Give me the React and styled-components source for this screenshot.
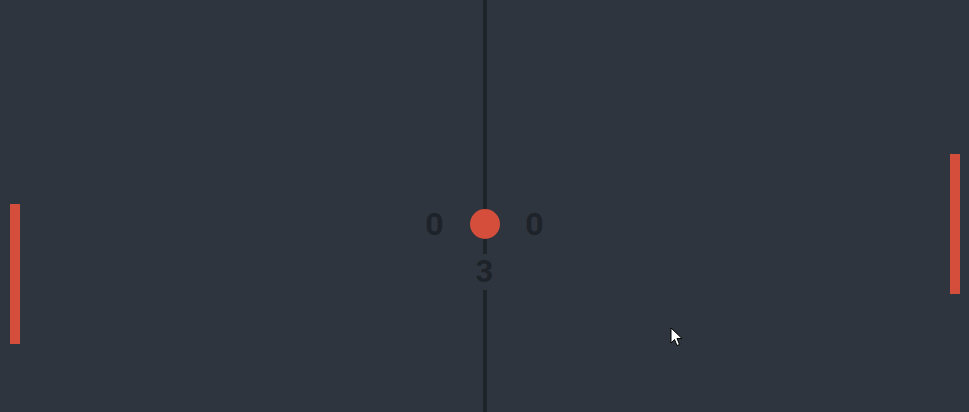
import React from 'react';
import styled, { createGlobalStyle } from 'styled-components';

const GlobalStyle = createGlobalStyle`
html, body {
    margin: 0;
    padding: 0;
    background: #2f353e;
    font-family: Roboto, "Liberation Sans", sans-serif;
}
`;

const Court = styled.div`
position: relative;
width: 100vw;
height: 100vh;
overflow: hidden;
background: #2f353e;
display: flex;
flex-direction: column;
align-items: center;
box-sizing: border-box;
padding-top: 209px;
&::before {
    content: '';
    position: absolute;
    top: 0;
    bottom: 0;
    left: calc(50% - 2px);
    width: 4px;
    background: #1f242b;
}
`;

const ScoreRow = styled.div`
position: relative;
display: flex;
align-items: center;
gap: 20px;
height: 30px;
`;

const Score = styled.div`
width: 30px;
text-align: center;
font-size: 32px;
font-weight: 700;
line-height: 30px;
color: #1e232a;
`;

const Ball = styled.div`
width: 30px;
height: 30px;
border-radius: 50%;
background: #d44e3b;
`;

const Countdown = styled.div`
position: relative;
margin-top: 15px;
padding: 0 6px;
font-size: 31px;
font-weight: 700;
line-height: 36px;
color: #1e232a;
background: #2f353e;
`;

const Paddle = styled.div`
position: absolute;
top: ${props => props.top}px;
${props => props.side}: ${props => props.offset}px;
width: 10px;
height: 140px;
background: #d44e3b;
`;

const Cursor = styled.svg`
position: absolute;
left: 670px;
top: 327px;
`;

function App() {
    return (
        <Court>
            <GlobalStyle />
            <Paddle side="left" offset={10} top={204} />
            <Paddle side="right" offset={9} top={154} />
            <ScoreRow>
                <Score>0</Score>
                <Ball />
                <Score>0</Score>
            </ScoreRow>
            <Countdown>3</Countdown>
            <Cursor width="13" height="20" viewBox="0 0 13 20">
                <path d="M1 1 L1 16 L4.5 12.5 L7 18.5 L9.5 17.5 L7 11.5 L12 11.5 Z" fill="#fff" stroke="#000" strokeWidth="1" />
            </Cursor>
        </Court>
    );
}

export default App;
